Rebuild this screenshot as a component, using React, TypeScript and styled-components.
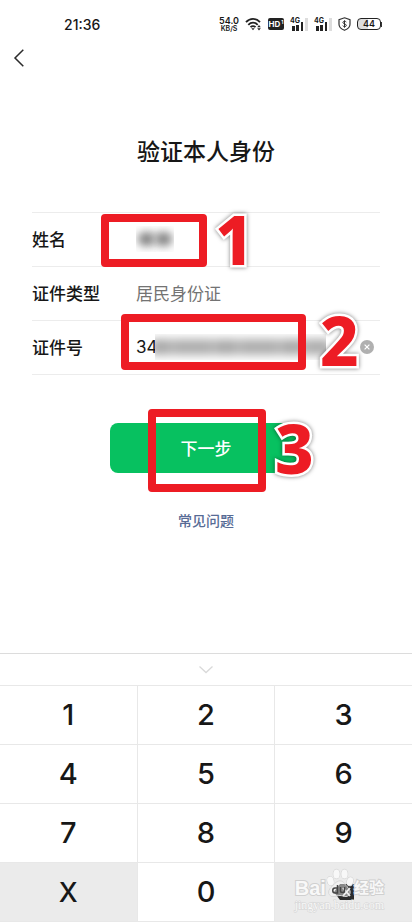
import React, { useState } from "react";
import styled, { createGlobalStyle } from "styled-components";

const GlobalStyle = createGlobalStyle`
  * { box-sizing: border-box; }
  body {
    margin: 0;
    background: #fff;
    color: #171717;
    font-family: Inter, "Noto Sans CJK SC", sans-serif;
  }
  button, input { font: inherit; color: inherit; border: 0; background: none; padding: 0; }
  button { cursor: pointer; }
  svg { display: block; }
`;

const Page = styled.div`
  min-height: 100vh;
  display: flex;
  flex-direction: column;
  overflow: hidden;
`;

const StatusBar = styled.header`
  display: flex;
  align-items: center;
  justify-content: space-between;
  height: 48px;
  padding: 0 30px 0 64px;
`;

const Clock = styled.time`
  font-size: 14px;
  font-weight: 500;
`;

const StatusIcons = styled.div`
  display: flex;
  align-items: center;
  gap: 6px;
`;

const Speed = styled.div`
  display: flex;
  flex-direction: column;
  align-items: center;
  width: 20px;
  font-size: 9px;
  line-height: 9px;
  font-weight: 600;
  white-space: nowrap;
`;

const SpeedUnit = styled.span`
  font-size: 7px;
  line-height: 7px;
`;

const HdBadge = styled.span`
  display: flex;
  gap: 1px;
  justify-content: center;
  width: 16px;
  height: 12px;
  border-radius: 2px;
  background: #222;
  color: #fff;
  font-size: 8px;
  line-height: 12px;
  font-weight: 700;
`;

const HdIndex = styled.span`
  font-size: 5px;
  line-height: 8px;
`;

const Signal = styled.span`
  position: relative;
  width: 18px;
  height: 14px;
`;

const SignalLabel = styled.span`
  position: absolute;
  left: 0;
  top: 0;
  font-size: 7px;
  line-height: 8px;
  font-weight: 700;
`;

const Battery = styled.span`
  display: flex;
  align-items: center;
`;

const BatteryBody = styled.span`
  width: 24px;
  height: 12px;
  border: 1px solid #222;
  border-radius: 4px;
  background: linear-gradient(90deg, #ddd 44%, #fff 44%);
  font-size: 9px;
  line-height: 10px;
  font-weight: 600;
  text-align: center;
`;

const BatteryTip = styled.span`
  width: 1px;
  height: 5px;
  background: #333;
`;

const NavBar = styled.nav`
  display: flex;
  padding: 0 12px;
`;

const BackButton = styled.button`
  width: 14px;
  height: 20px;
`;

const Title = styled.h1`
  margin: 68px 0 44px;
  font-size: 23px;
  line-height: 32px;
  font-weight: 500;
  text-align: center;
`;

const Form = styled.form`
  display: flex;
  flex-direction: column;
  align-items: center;
  padding: 0 32px;
`;

const Fields = styled.div`
  width: 100%;
  border-top: 1px solid #ececec;
`;

const Row = styled.div`
  position: relative;
  display: flex;
  align-items: center;
  height: 54px;
  padding-bottom: 2px;
  border-bottom: 1px solid #ececec;
  font-size: 17px;
`;

const Label = styled.label`
  flex: none;
  width: 104px;
  font-weight: 500;
`;

const Field = styled.input<{ $width?: number; $muted?: boolean }>`
  width: ${(p) => (p.$width ? `${p.$width}px` : "100%")};
  height: 26px;
  outline: none;
  color: ${(p) => (p.$muted ? "#737373" : "#171717")};
`;

const Mask = styled.span<{ $width: number }>`
  flex: none;
  display: flex;
  align-items: center;
  justify-content: center;
  width: ${(p) => p.$width}px;
  height: 26px;
  overflow: hidden;
`;

const MaskBlob = styled.span`
  width: 17px;
  height: 14px;
  border-radius: 6px;
  background: #858585;
  filter: blur(4px);
`;

const MaskStrip = styled.span`
  flex: none;
  width: 180px;
  height: 16px;
  background: repeating-linear-gradient(90deg, #aaa 0 18px, #b8b8b8 18px 24px, #aeaeae 24px 60px, #b9b9b9 60px 66px);
  filter: blur(5px);
`;

const ClearButton = styled.button`
  width: 14px;
  height: 14px;
  margin-left: auto;
  margin-right: 6px;
`;

const SubmitWrap = styled.div`
  position: relative;
  width: 192px;
  margin-top: 48px;
`;

const SubmitButton = styled.button`
  width: 100%;
  height: 50px;
  padding-bottom: 2px;
  border-radius: 8px;
  background: #07c160;
  color: #fff;
  font-size: 17px;
  font-weight: 500;
`;

const HelpLink = styled.a`
  margin-top: 38px;
  color: #576b95;
  font-size: 14px;
  line-height: 20px;
  font-weight: 500;
  text-decoration: none;
`;

const Frame = styled.span<{ $x: number; $y: number; $w: number; $h: number }>`
  position: absolute;
  left: ${(p) => p.$x}px;
  top: ${(p) => p.$y}px;
  width: ${(p) => p.$w}px;
  height: ${(p) => p.$h}px;
  border: 8px solid #ed1c24;
  border-radius: 4px;
  pointer-events: none;
`;

const StepNumber = styled.span<{ $x: number; $y: number }>`
  position: absolute;
  z-index: 1;
  left: ${(p) => p.$x}px;
  top: ${(p) => p.$y}px;
  color: #ed1c24;
  font-family: "Noto Sans", sans-serif;
  font-size: 67px;
  line-height: 50px;
  font-weight: 800;
  -webkit-text-stroke: 5px #fff;
  stroke-linejoin: round;
  paint-order: stroke fill;
  filter: drop-shadow(0 0 2px rgba(0, 0, 0, 0.5));
  pointer-events: none;
`;

const Keyboard = styled.section`
  position: relative;
  margin-top: auto;
  border-top: 1px solid #dcdcdc;
`;

const CollapseButton = styled.button`
  display: flex;
  align-items: center;
  justify-content: center;
  width: 100%;
  height: 31px;
`;

const Keys = styled.div`
  display: grid;
  grid-template-columns: repeat(3, 1fr);
  gap: 1px;
  padding: 1px 0;
  background: #e8e8e8;
`;

const Key = styled.button<{ $shaded?: boolean }>`
  display: flex;
  align-items: center;
  justify-content: center;
  height: 58px;
  padding-bottom: ${(p) => (p.$shaded ? 0 : 2)}px;
  background: ${(p) => (p.$shaded ? "#ebebeb" : "#fff")};
  font-size: ${(p) => (p.$shaded ? 27 : 29)}px;
  font-weight: 450;
`;

const Watermark = styled.div`
  position: absolute;
  right: 28px;
  bottom: 11px;
  display: flex;
  flex-direction: column;
  align-items: center;
  color: #f8f8f8;
  -webkit-text-stroke: 2px #d0d0d0;
  paint-order: stroke fill;
  pointer-events: none;
`;

const WatermarkBrand = styled.div`
  display: flex;
  align-items: flex-end;
  font-family: "Liberation Sans", "Noto Sans CJK SC", sans-serif;
  font-size: 20px;
  line-height: 22px;
  font-weight: 700;
`;

const WatermarkChinese = styled.span`
  font-size: 15px;
`;

const WatermarkSite = styled.div`
  font-family: "Liberation Serif", serif;
  font-size: 12px;
  line-height: 12px;
  -webkit-text-stroke: 1px #d4d4d4;
`;

function WifiIcon() {
  return (
    <svg width="17" height="14" viewBox="0 0 17 14" fill="none" stroke="#222" strokeWidth="1.8" aria-label="Wi-Fi">
      <path d="M1 5.2C5 .8 11 .8 15 5.2M3.3 7.8c2.7-2.8 6.7-2.8 9.4 0M5.5 10.2c1.5-1.5 3.5-1.5 5 0" />
      <path d="M6.3 11.2h3.4L8 13.2z" fill="#222" stroke="none" />
      <path d="M12.2 10.2 14 8l1.8 2.2zM12.2 11.2h3.6L14 13.4z" fill="#222" stroke="none" />
    </svg>
  );
}

function SignalIcon() {
  return (
    <Signal>
      <svg width="18" height="14" viewBox="0 0 18 14" aria-label="信号">
        <path d="M2 9h3v5H2zM6 8h3v6H6zM11 5h2v9h-2z" fill="#222" />
        <path d="M15 1h3v13h-3z" fill="#ddd" />
      </svg>
      <SignalLabel>4G</SignalLabel>
    </Signal>
  );
}

function ShieldIcon() {
  return (
    <svg width="13" height="14" viewBox="0 0 13 14" fill="none" stroke="#333" aria-label="安全">
      <path d="M6.5.8 12 2.7v4.6c0 2.8-2.2 4.8-5.5 6C3.2 12.1 1 10.1 1 7.3V2.7z" strokeWidth="1.2" />
      <path d="M8.3 5C7.7 4 4.9 4 4.9 5.5S8.4 6.9 8.4 8.4 5.3 9.9 4.7 8.7M6.5 3.3v7.4" />
    </svg>
  );
}

function PawIcon() {
  return (
    <svg width="28" height="31" viewBox="0 0 28 31" fill="#f8f8f8" stroke="#d0d0d0" strokeWidth="1">
      <ellipse cx="4.5" cy="13" rx="3.2" ry="4.5" transform="rotate(-15 4.5 13)" />
      <ellipse cx="10.5" cy="6" rx="3.2" ry="4.6" />
      <ellipse cx="18.5" cy="6" rx="3.2" ry="4.6" />
      <ellipse cx="24" cy="13.5" rx="3" ry="4.3" transform="rotate(15 24 13.5)" />
      <path d="M14 13c4 0 5 4 8 6.5 4 4 2 9-2 9-3 0-4-1-6-1s-4 1-7 1c-4 0-6-5-2-9 3-2.5 5-6.5 9-6.5z" fillOpacity=".45" />
      <path d="M11.5 17v8H9c-3 0-3-5 0-5h2.5M14.5 19v4c0 2 4 2 4 0v-4" fill="none" stroke="#444" strokeWidth="1.5" />
    </svg>
  );
}

export default function App() {
  const [id, setId] = useState("34");
  const press = (key: string) => setId((value) => value + key);

  return (
    <Page>
      <GlobalStyle />
      <StatusBar>
        <Clock>21:36</Clock>
        <StatusIcons>
          <Speed>
            <span>54.0</span>
            <SpeedUnit>KB/S</SpeedUnit>
          </Speed>
          <WifiIcon />
          <HdBadge>
            HD<HdIndex>1</HdIndex>
          </HdBadge>
          <SignalIcon />
          <SignalIcon />
          <ShieldIcon />
          <Battery>
            <BatteryBody>44</BatteryBody>
            <BatteryTip />
          </Battery>
        </StatusIcons>
      </StatusBar>
      <NavBar>
        <BackButton aria-label="返回">
          <svg width="14" height="20" viewBox="0 0 14 20" fill="none" stroke="#2b2b2b" strokeWidth="1.5">
            <path d="M11.3 1.8 3 10l8.3 8.3" />
          </svg>
        </BackButton>
      </NavBar>
      <Title>验证本人身份</Title>
      <Form onSubmit={(e) => e.preventDefault()}>
        <Fields>
          <Row>
            <Label as="span">姓名</Label>
            <Mask $width={38} role="img" aria-label="姓名已隐藏">
              <MaskBlob />
              <MaskBlob />
            </Mask>
            <Frame $x={69} $y={1} $w={106} $h={53} />
            <StepNumber $x={183} $y={1}>1</StepNumber>
          </Row>
          <Row>
            <Label htmlFor="id-type">证件类型</Label>
            <Field id="id-type" value="居民身份证" readOnly $muted />
          </Row>
          <Row>
            <Label htmlFor="id-number">证件号</Label>
            <Field id="id-number" value={id} onChange={(e) => setId(e.target.value)} $width={19} />
            <Mask $width={171}>
              <MaskStrip />
            </Mask>
            <ClearButton type="button" aria-label="清除" onClick={() => setId("")}>
              <svg width="14" height="14" viewBox="0 0 14 14">
                <circle cx="7" cy="7" r="7" fill="#b0b0b0" />
                <path d="m4.6 4.6 4.8 4.8m0-4.8L4.6 9.4" stroke="#fff" strokeWidth="1.2" />
              </svg>
            </ClearButton>
            <Frame $x={89} $y={-7} $w={185} $h={56} />
            <StepNumber $x={288} $y={-6}>2</StepNumber>
          </Row>
        </Fields>
        <SubmitWrap>
          <SubmitButton type="submit">下一步</SubmitButton>
          <Frame $x={38} $y={-14} $w={118} $h={83} />
          <StepNumber $x={165} $y={0}>3</StepNumber>
        </SubmitWrap>
        <HelpLink href="#help">常见问题</HelpLink>
      </Form>
      <Keyboard aria-label="数字键盘">
        <CollapseButton aria-label="收起键盘">
          <svg width="16" height="10" viewBox="0 0 16 10" fill="none" stroke="#d9d9d9" strokeWidth="1.3">
            <path d="m1.5 1.5 6.5 6 6.5-6" />
          </svg>
        </CollapseButton>
        <Keys>
          {["1", "2", "3", "4", "5", "6", "7", "8", "9"].map((key) => (
            <Key key={key} onClick={() => press(key)}>
              {key}
            </Key>
          ))}
          <Key $shaded onClick={() => press("X")}>X</Key>
          <Key onClick={() => press("0")}>0</Key>
          <Key $shaded aria-label="删除" onClick={() => setId((value) => value.slice(0, -1))}>
            <svg width="22" height="18" viewBox="0 0 22 18">
              <path d="M7 1h14v16H7L1 9z" fill="#2b2b2b" />
              <path d="m10 5 7 8m0-8-7 8" stroke="#ebebeb" strokeWidth="1.8" />
            </svg>
          </Key>
        </Keys>
        <Watermark aria-hidden="true">
          <WatermarkBrand>
            Bai
            <PawIcon />
            <WatermarkChinese>经验</WatermarkChinese>
          </WatermarkBrand>
          <WatermarkSite>jingyan.baidu.com</WatermarkSite>
        </Watermark>
      </Keyboard>
    </Page>
  );
}
